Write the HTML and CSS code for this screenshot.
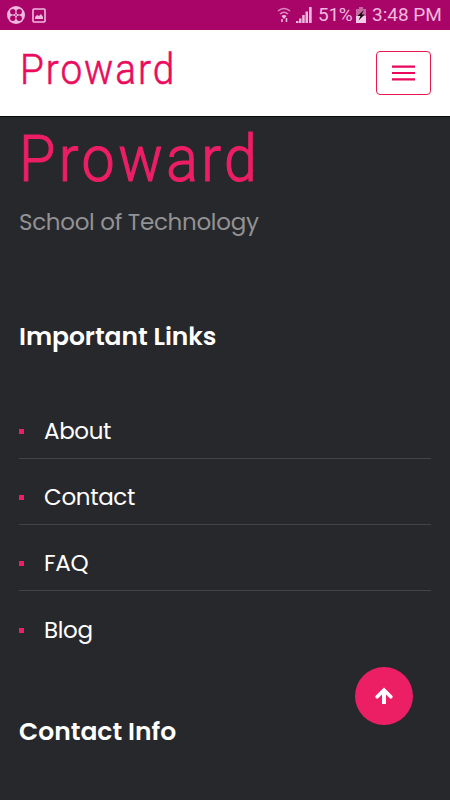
FILE: index.html
```html
<!DOCTYPE html>
<html lang="en">
<head>
<meta charset="utf-8">
<meta name="viewport" content="width=device-width, initial-scale=1">
<title>Proward</title>
<link rel="stylesheet" href="styles.css">
</head>
<body>
<div class="status">
  <svg class="s-app" viewBox="0 0 18 18" width="18" height="18"><circle cx="9" cy="9" r="9" fill="#efb9df"/><g fill="#a90569"><circle cx="5.800" cy="5.800" r="2.700"/><circle cx="12.200" cy="5.800" r="2.700"/><circle cx="5.800" cy="12.200" r="2.700"/><circle cx="12.200" cy="12.200" r="2.700"/><path d="M7 7l1.500 1.500M11 7L9.500 8.500M7 11l1.500-1.500M11 11L9.500 9.500" stroke="#a90569"/></g></svg>
  <svg class="s-pic" viewBox="0 0 14 15" width="14" height="15"><rect x="1" y="1" width="12" height="13" rx="1" fill="none" stroke="#efb9df" stroke-width="1.6"/><path d="M3 11V9l2-2 2 1 2-2 2 3v2z" fill="#efb9df"/></svg>
  <span class="grow"></span>
  <svg class="s-wifi" viewBox="0 0 14 16" width="14" height="16" fill="none" stroke="#dc8ac0" stroke-width="1.500"><path d="M1 4q6-5 12 0M3 7q4-3.500 8 0"/><path d="M4.500 9q2.500-2 5 0L7 12z" fill="#efb9df" stroke="none"/><path d="M5 12v3M9.500 11v4" stroke="#efb9df"/></svg>
  <svg class="s-signal" viewBox="0 0 16 16" width="16" height="16" fill="#efb9df"><path d="M0 14h2.500v2H0zM3 11.500h2.500V16H3zM6.200 8h2.500v8H6.200zM9.500 4.500H12V16H9.500zM13 0h2.700v16H13z"/></svg>
  <span class="pct">51%</span>
  <svg class="s-bat" viewBox="0 0 10 16" width="10" height="16"><path d="M3 0h4v2h3v14H0V2h3z" fill="#c768a5"/><path d="M0 9h10v7H0z" fill="#f5cde8"/><path d="M8 3L1.500 9h3L2.500 13.500 8.500 7.500H5.500z" fill="#0c0208"/></svg>
  <span class="time">3:48 PM</span>
</div>
<header class="bar">
  <span class="logo">Proward</span>
  <button class="menu" aria-label="Menu"><svg viewBox="0 0 23 17" width="23" height="17"><path d="M0 1.600h23M0 8h23M0 14.400h23" stroke="#e8095c" stroke-width="2.200"/></svg></button>
</header>
<footer class="foot">
  <div class="brand">Proward</div>
  <p class="tag">School of Technology</p>
  <h3 class="links-title">Important Links</h3>
  <ul class="links">
    <li>About</li>
    <li>Contact</li>
    <li>FAQ</li>
    <li>Blog</li>
  </ul>
  <h3 class="info-title">Contact Info</h3>
</footer>
<a class="top" aria-label="Back to top"><svg viewBox="0 0 18 18" width="18" height="18" fill="none" stroke="#fff"><path d="M9 17V3" stroke-width="4"/><path d="M2.200 9.800L9 3l6.800 6.800" stroke-width="3.600" stroke-linecap="round"/></svg></a>
</body>
</html>
```
FILE: styles.css
```css
* { box-sizing: border-box; }
body {
  margin: 0;
  height: 800px;
  overflow: hidden;
  background: #27282c;
  font-family: Poppins, Inter, "Liberation Sans", sans-serif;
}
svg { display: block; flex: none; }
.status {
  display: flex;
  align-items: center;
  height: 30px;
  padding: 0 9px 0 7px;
  background: #a90569;
  color: #efb9df;
  font: 19px/30px Roboto, sans-serif;
}
.s-pic { margin-left: 7px; }
.grow { flex: 1; }
.s-signal { margin-left: 5px; }
.pct { margin-left: 6px; width: 34px; letter-spacing: -0.3px; }
.s-bat { margin-left: 4px; }
.time { margin-left: 6px; width: 69px; white-space: nowrap; }
.bar {
  display: flex;
  justify-content: space-between;
  height: 87px;
  padding: 21px 19px 0 20px;
  background: #fff;
  border-bottom: 1px solid #08090c;
}
.logo {
  height: 34px;
  padding-top: 1px;
  color: #ea0b5c;
  font: 300 43px/34px Roboto, sans-serif;
  letter-spacing: 2.200px;
  transform: scaleX(0.9);
  transform-origin: 0 0;
  -webkit-text-stroke: 0.600px #ea0b5c;
}
.menu {
  display: flex;
  align-items: center;
  justify-content: center;
  width: 55px;
  height: 44px;
  padding: 0;
  background: #fff;
  border: 1px solid #e8194e;
  border-radius: 4px;
}
.foot { padding: 18px 19px 0; }
.brand {
  height: 46px;
  color: #ec1e64;
  font: 300 65.500px/48px Roboto, sans-serif;
  letter-spacing: 3.900px;
  white-space: nowrap;
  transform: scaleX(0.9);
  transform-origin: 0 0;
  -webkit-text-stroke: 1.200px #ec1e64;
}
.tag {
  margin: 24px 0 0;
  color: #929294;
  font-size: 23px;
  line-height: 34px;
  letter-spacing: -0.300px;
}
h3 {
  margin: 0;
  color: #fff;
  font-size: 25px;
  font-weight: 600;
  line-height: 36px;
}
.links-title { margin-top: 80px; letter-spacing: -0.050px; }
.links {
  margin: 37.500px 0 0;
  padding: 0;
  list-style: none;
}
.links li {
  display: flex;
  align-items: center;
  height: 66.200px;
  padding-top: 12px;
  border-bottom: 1px solid #424347;
  color: #fff;
  font-size: 23px;
  letter-spacing: -0.350px;
}
.links li:last-child { border-bottom: 0; }
.links li::before {
  content: "";
  width: 5px;
  height: 5px;
  margin-right: 20px;
  background: #ec1e64;
}
.info-title { margin-top: 56.500px; }
.top {
  position: absolute;
  left: 355px;
  top: 667px;
  display: flex;
  align-items: center;
  justify-content: center;
  width: 58px;
  height: 58px;
  border-radius: 50%;
  background: #ec1e64;
}
```
